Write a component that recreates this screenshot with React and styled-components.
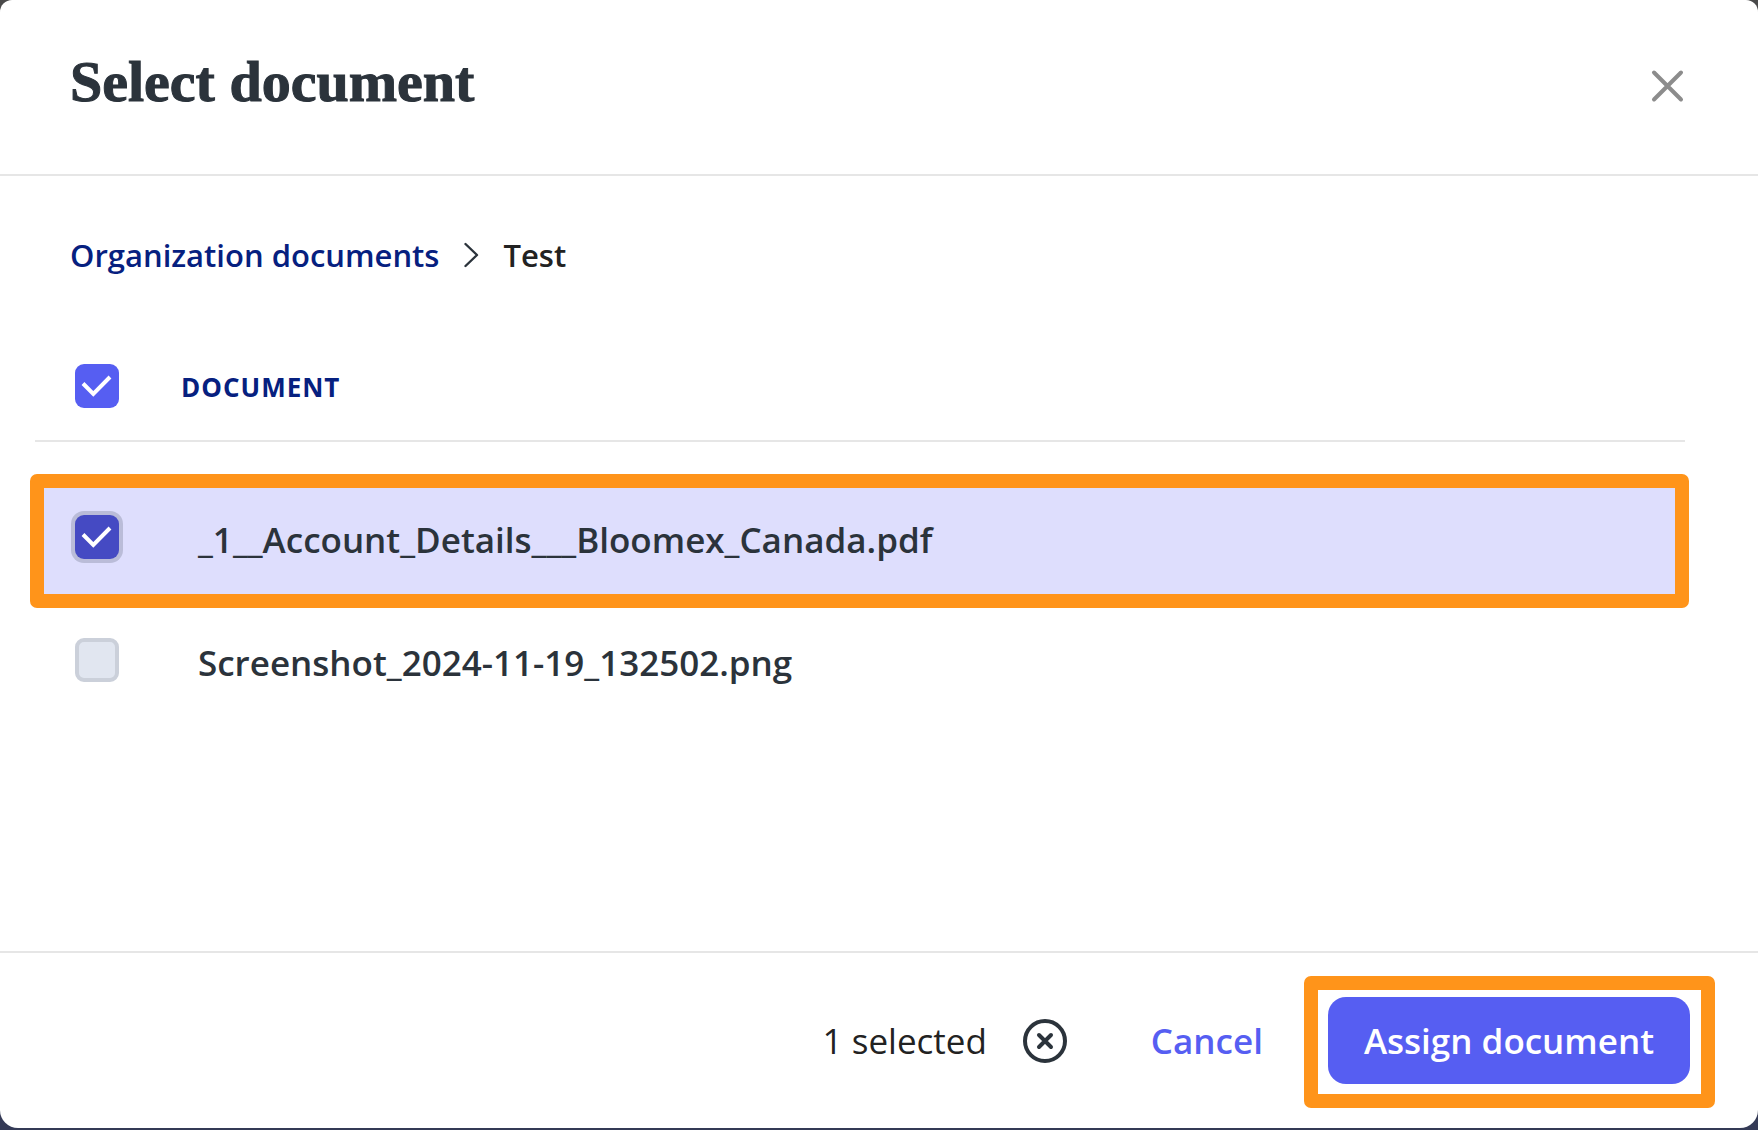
import { useState } from 'react'
import styled, { createGlobalStyle } from 'styled-components'

const GlobalStyle = createGlobalStyle`
  *{ box-sizing: border-box; }
  body{
    margin: 0; color: #222; font-family: 'Open Sans', 'Noto Sans', sans-serif; font-size: 35px; line-height: 48px;
  }
  button{ font: inherit; border: 0; padding: 0; background: none; cursor: pointer; }
`

// Dialog shell
const Backdrop = styled.div`
  min-height: 100vh; display: flex; padding-bottom: 2px;
  background: linear-gradient(#4a4a4a, #343a56);
`
const Dialog = styled.section`
  flex: 1; display: flex; flex-direction: column;
  background: #fff; border-radius: 12px 12px 18px 18px;
`
const Header = styled.header`
  display: flex; justify-content: space-between; align-items: center;
  padding: 46px 72px 56px 70px; border-bottom: 2px solid #e6e6e6;
`
const Title = styled.h1`
  margin: 0; font-family: 'Liberation Serif', serif; font-size: 58px; line-height: 72px; font-weight: 700; color: #2b333b;
  -webkit-text-stroke: 1px #2b333b;
`
const CloseBtn = styled.button` && { display: flex; padding-top: 8px; color: #8c8c8c; } `
const Body = styled.div` flex: 1; padding: 55px 73px 48px 35px; `

// Breadcrumb
const Crumbs = styled.nav`
  display: flex; align-items: center; gap: 24px; padding-left: 35px;
  font-size: 31px; line-height: 48px; font-weight: 600;
`
const CrumbLink = styled.a` color: #06207f; text-decoration: none; `

// Document table
const Table = styled.table` width: 100%; margin-top: 53px; border-collapse: separate; border-spacing: 0; `
const HeadCell = styled.th`
  height: 110px; padding: 2px 0 0; text-align: left; border-bottom: 2px solid #e6e6e6;
  font-size: 26px; font-weight: 700; letter-spacing: 1px; color: #06207f;
`
const CheckHead = styled(HeadCell)` width: 146px; padding: 0 0 0 40px; `
const Spacer = styled.tbody` &::before{ content: ''; display: block; height: 33px; } `
const Row = styled.tr` position: relative; background: ${(p) => (p.$selected ? '#dedefd' : 'transparent')}; `
const CheckCell = styled.td` height: 123px; padding: 0 0 0 40px; `
const NameCell = styled.td` padding: 6px 0 0 17px; font-weight: 600; color: #2b333b; `

// Orange callout drawn over the row or the button
const Callout = styled.span`
  position: absolute; inset: ${(p) => p.$inset}; pointer-events: none;
  border: 14px solid #ff941a; border-radius: 7px;
`

const CheckWrap = styled.span` display: grid; justify-content: start; `
const CheckInput = styled.input`
  grid-area: 1 / 1; appearance: none; width: 44px; height: 44px; margin: 0; cursor: pointer;
  border: 4px solid #cbd0da; border-radius: 9px; background: #e1e6f0;
  box-shadow: ${(p) => (p.$active ? '0 0 0 4px #babcd8' : 'none')};
  &:checked{ border-color: transparent; background: ${(p) => (p.$active ? '#454ac3' : '#565ef2')} border-box; }
`
const Tick = styled.svg` grid-area: 1 / 1; pointer-events: none; `

// Footer
const Footer = styled.footer`
  display: flex; justify-content: flex-end; align-items: center;
  padding: 44px 68px 44px 70px; border-top: 2px solid #e6e6e6;
`
const ClearBtn = styled.button` && { display: flex; margin: 0 84px 0 36px; color: #2b333b; } `
const CancelBtn = styled.button` && { font-weight: 600; color: #565ef2; } `
const AssignWrap = styled.div` position: relative; display: flex; margin-left: 65px; `
const AssignBtn = styled.button`
  && { height: 87px; padding: 0 36px; border-radius: 18px; background: #565ef2; color: #fff; font-weight: 600; }
`

function Checkbox({ checked, active, label, onChange }) {
  return (
    <CheckWrap>
      <CheckInput type="checkbox" aria-label={label} checked={checked} $active={active} onChange={onChange} />
      {checked && (
        <Tick width="44" height="44" viewBox="0 0 44 44" fill="none" stroke="#fff" strokeWidth="4">
          <path d="M8 19.5 L18.3 29.8 L35 13" />
        </Tick>
      )}
    </CheckWrap>
  )
}

const documents = ['_1__Account_Details___Bloomex_Canada.pdf', 'Screenshot_2024-11-19_132502.png']

export default function App() {
  const [selected, setSelected] = useState([documents[0]])
  const toggle = (name) =>
    setSelected((s) => (s.includes(name) ? s.filter((n) => n !== name) : [...s, name]))
  const toggleAll = () => setSelected((s) => (s.length ? [] : documents))

  return (
    <>
      <GlobalStyle />
      <Backdrop>
        <Dialog role="dialog" aria-labelledby="dialog-title">
          <Header>
            <Title id="dialog-title">Select document</Title>
            <CloseBtn aria-label="Close">
              <svg width="36" height="36" viewBox="0 0 36 36" fill="none" stroke="currentColor" strokeWidth="4" strokeLinecap="round">
                <path d="M4 4.5 L31 31.5 M31 4.5 L4 31.5" />
              </svg>
            </CloseBtn>
          </Header>

          <Body>
            <Crumbs aria-label="Breadcrumb">
              <CrumbLink href="#documents">Organization documents</CrumbLink>
              <svg width="16" height="26" viewBox="0 0 16 26" fill="none" stroke="#2b333b" strokeWidth="2.4" strokeLinecap="round" strokeLinejoin="round">
                <path d="M2.5 2 L14 13 L2.5 24" />
              </svg>
              <span>Test</span>
            </Crumbs>

            <Table>
              <thead>
                <tr>
                  <CheckHead>
                    <Checkbox label="Select all" checked={selected.length > 0} onChange={toggleAll} />
                  </CheckHead>
                  <HeadCell>DOCUMENT</HeadCell>
                </tr>
              </thead>
              <Spacer />
              <tbody>
                {documents.map((name, idx) => (
                  <Row key={name} $selected={selected.includes(name)}>
                    <CheckCell>
                      <Checkbox label={name} checked={selected.includes(name)} active={idx === 0} onChange={() => toggle(name)} />
                      {idx === 0 && <Callout $inset="-1px -4px -10px -5px" />}
                    </CheckCell>
                    <NameCell>{name}</NameCell>
                  </Row>
                ))}
              </tbody>
            </Table>
          </Body>

          <Footer>
            <span>{selected.length} selected</span>
            <ClearBtn aria-label="Clear selection" onClick={() => setSelected([])}>
              <svg width="44" height="44" viewBox="0 0 44 44" fill="none" stroke="currentColor" strokeWidth="4" strokeLinecap="round">
                <circle cx="22" cy="22" r="20" />
                <path d="M16 16 L28 28 M28 16 L16 28" />
              </svg>
            </ClearBtn>
            <CancelBtn>Cancel</CancelBtn>
            <AssignWrap>
              <AssignBtn>Assign document</AssignBtn>
              <Callout $inset="-21px -25px -24px -24px" />
            </AssignWrap>
          </Footer>
        </Dialog>
      </Backdrop>
    </>
  )
}
